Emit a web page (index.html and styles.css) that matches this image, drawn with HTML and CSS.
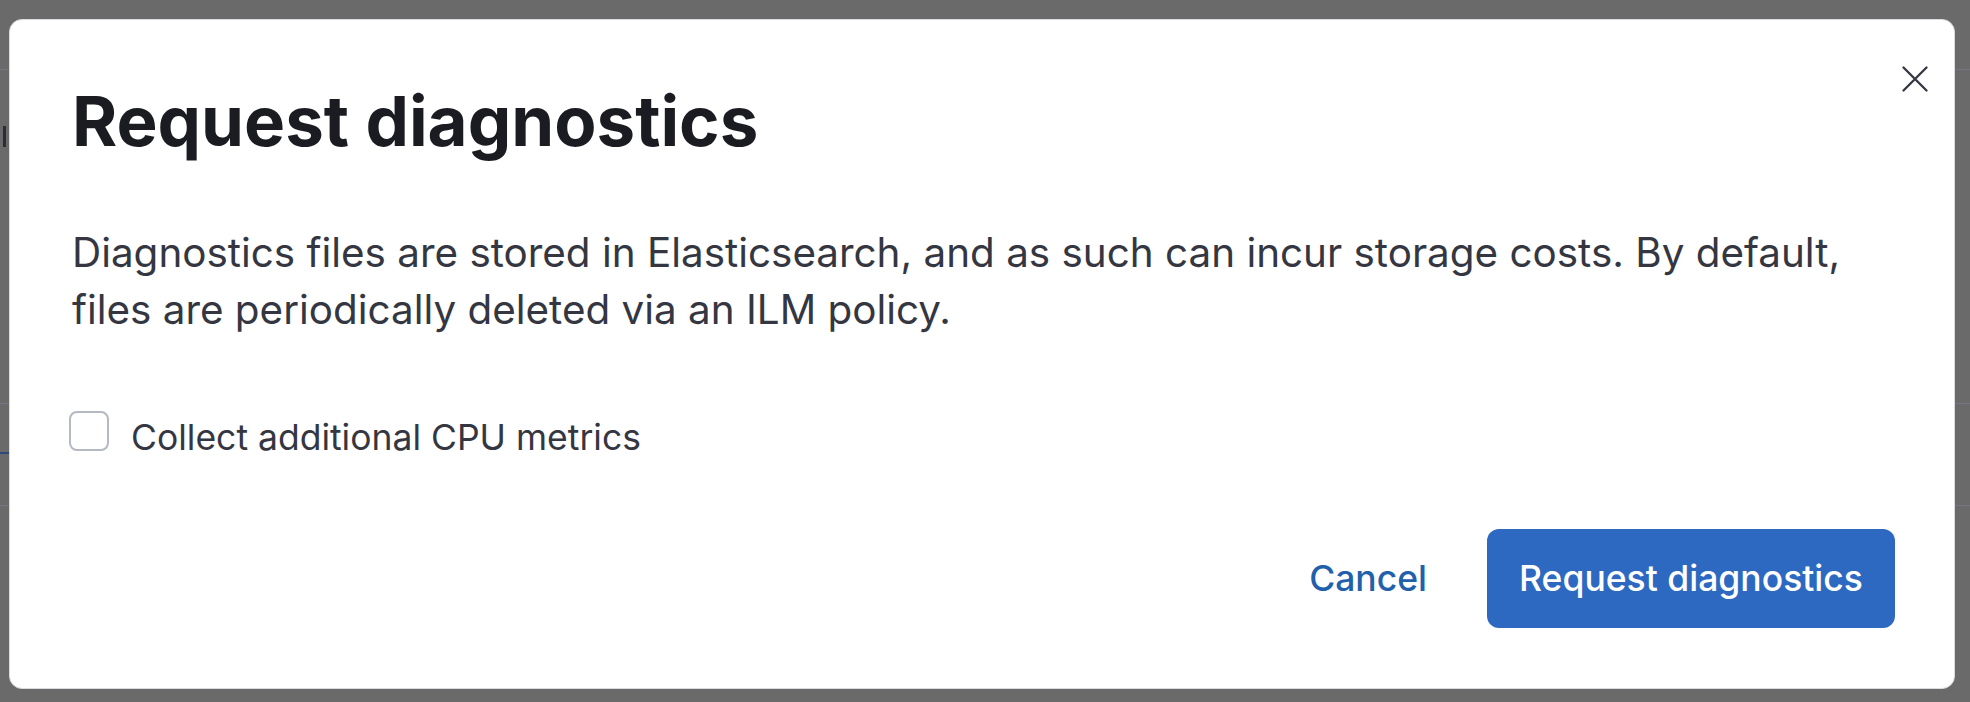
FILE: index.html
```html
<!DOCTYPE html>
<html lang="en">
<head>
<meta charset="utf-8">
<title>Request diagnostics</title>
<link rel="stylesheet" href="styles.css">
</head>
<body>
<div class="backdrop">
  <div class="bg-line bg-line-a"></div>
  <div class="bg-line bg-line-b"></div>
  <div class="bg-line bg-line-c"></div>
  <div class="bg-accent"></div>
  <div class="bg-stroke"></div>
  <div class="modal" role="dialog" aria-labelledby="modal-title">
    <button class="close" aria-label="Close">
      <svg viewBox="0 0 26 26" width="26" height="26"><path d="M1.5 1.5 L24.5 24.5 M24.5 1.5 L1.5 24.5" stroke="#343741" stroke-width="2.3" stroke-linecap="round" fill="none"/></svg>
    </button>
    <h1 class="title" id="modal-title">Request diagnostics</h1>
    <p class="body-text">Diagnostics files are stored in Elasticsearch, and as such can incur storage costs. By default,<br>files are periodically deleted via an ILM policy.</p>
    <label class="check-row">
      <span class="checkbox"></span>
      <span class="check-label">Collect additional CPU metrics</span>
    </label>
    <div class="footer">
      <button class="btn-link">Cancel</button>
      <button class="btn-primary">Request diagnostics</button>
    </div>
  </div>
</div>
</body>
</html>
```

FILE: styles.css
```css
* { box-sizing: border-box; }
html, body { margin: 0; padding: 0; }
body {
  width: 1970px;
  height: 702px;
  overflow: hidden;
  background: #6a6a6a;
  font-family: "Inter", "Noto Sans", sans-serif;
}
.backdrop {
  position: relative;
  height: 702px;
  padding: 19px 15px 13px 9px;
  display: flex;
}
.bg-line {
  position: absolute;
  left: 0;
  right: 0;
  height: 1px;
  background: #737680;
}
.bg-line-a { top: 69px; }
.bg-line-b { top: 403px; }
.bg-line-c { top: 505px; }
.bg-accent {
  position: absolute;
  left: 0;
  top: 452px;
  width: 9px;
  height: 2px;
  background: #2b4a78;
}
.bg-stroke {
  position: absolute;
  left: 3px;
  top: 126px;
  width: 3px;
  height: 21px;
  background: #2c2d33;
}
.modal {
  position: relative;
  width: 1946px;
  height: 670px;
  background: #ffffff;
  border: 1px solid #d9dbe0;
  border-radius: 13px;
  padding: 0 59px 0 62px;
  display: flex;
  flex-direction: column;
}
.close {
  position: absolute;
  top: 45px;
  right: 25px;
  width: 28px;
  height: 28px;
  padding: 1px;
  border: 0;
  background: transparent;
  display: flex;
  align-items: center;
  justify-content: center;
}
.title {
  margin: 60px 0 0;
  font-size: 69px;
  line-height: 83px;
  font-weight: 700;
  color: #1a1c21;
}
.body-text {
  margin: 61px 0 0;
  font-size: 40.4px;
  line-height: 57px;
  color: #343741;
}
.check-row {
  margin: 73px 0 0 -3px;
  display: flex;
  align-items: flex-start;
  gap: 22px;
}
.checkbox {
  flex: none;
  width: 40px;
  height: 40px;
  border: 2px solid #b5b9c2;
  border-radius: 8px;
  background: #fff;
}
.check-label {
  margin-top: 7px;
  font-size: 35.5px;
  line-height: 40px;
  color: #343741;
}
.footer {
  margin-top: auto;
  margin-bottom: 60px;
  display: flex;
  justify-content: flex-end;
  align-items: center;
  gap: 60px;
}
.btn-link {
  border: 0;
  background: transparent;
  font-family: inherit;
  font-size: 35.5px;
  font-weight: 500;
  color: #2160ab;
  padding: 0;
}
.btn-primary {
  width: 408px;
  height: 99px;
  border: 0;
  border-radius: 12px;
  background: #2d69c1;
  color: #ffffff;
  font-family: inherit;
  font-size: 35.5px;
  font-weight: 500;
}
```
